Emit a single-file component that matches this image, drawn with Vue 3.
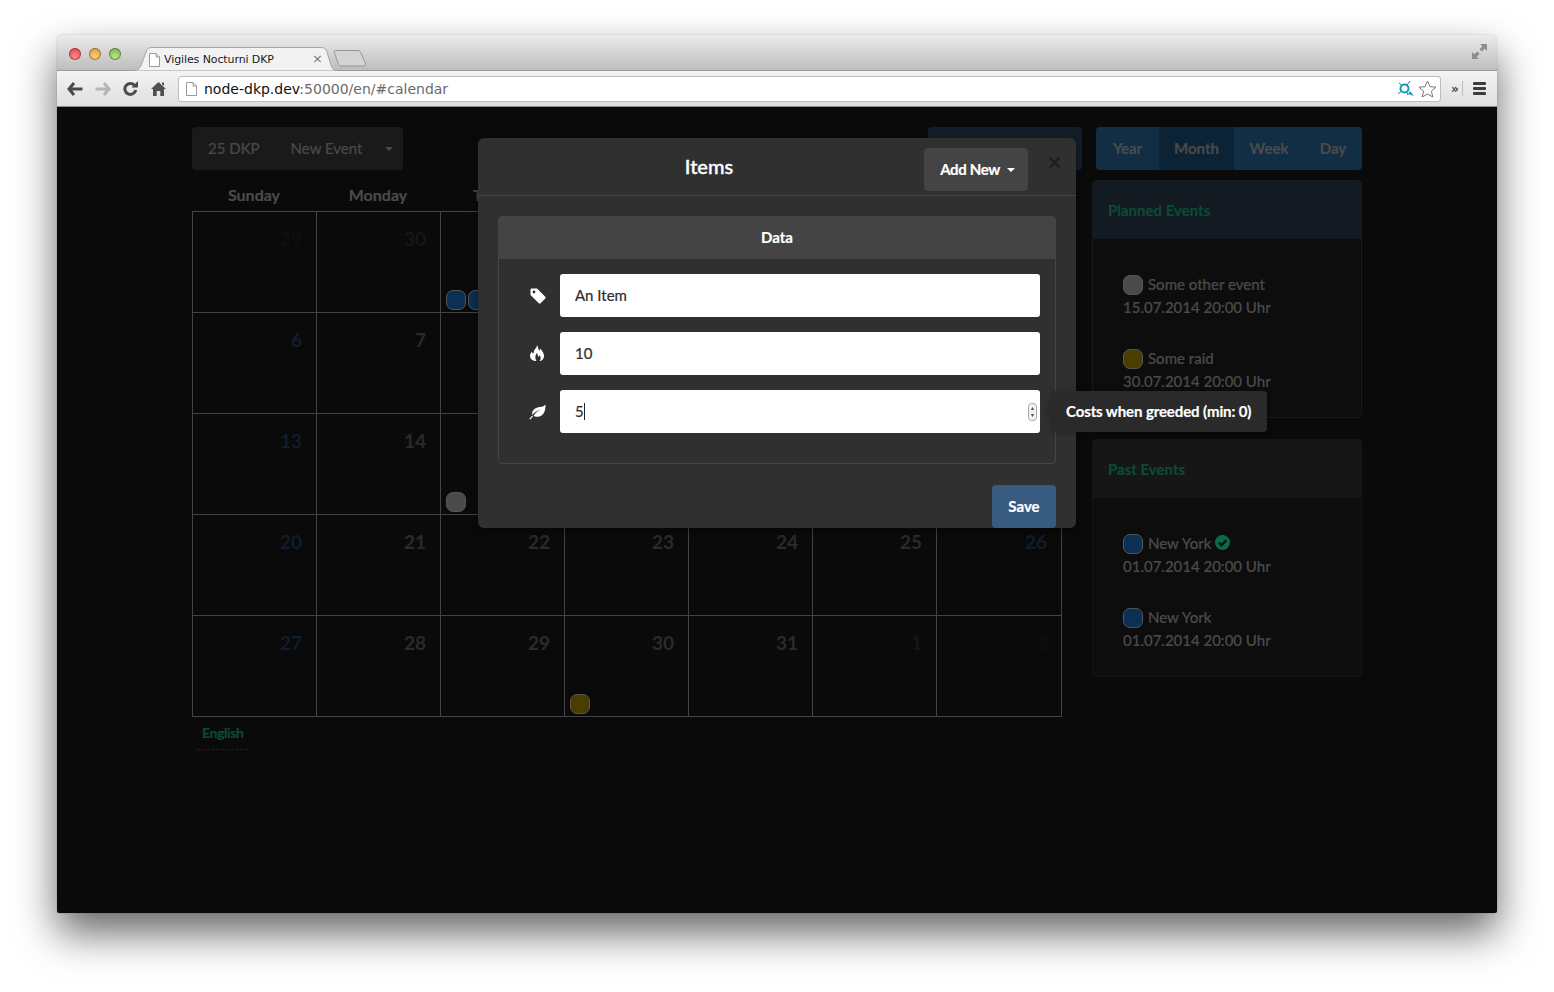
<template>
  <div class="page">
    <div class="window">
      <div class="titlebar">
        <div class="lights">
          <span class="light red"></span>
          <span class="light amber"></span>
          <span class="light green"></span>
        </div>
        <div class="tab">
          <svg class="tab-shape" width="204" height="25" viewBox="0 0 204 25">
            <path d="M0 24.5 C6 24.5 7 22 9 17 L13 6 C14 3 15 1.5 19 1.5 L188 1.5 C192 1.5 193 3 194 6 L198 19 C199 23 201 24.5 204 24.5" fill="#f2f2f2" stroke="#a5a5a5" />
          </svg>
          <svg class="tab-file" width="11" height="14" viewBox="0 0 11 14">
            <path d="M.5 .5 H7 L10.5 4 V13.5 H.5 Z M7 .5 V4 H10.5" fill="#fff" stroke="#9a9a9a" />
          </svg>
          <span class="tab-title">Vigiles Nocturni DKP</span>
          <span class="tab-close">×</span>
        </div>
        <svg class="newtab" width="34" height="17" viewBox="0 0 34 17">
          <path d="M1 1.5 C1 1 2 .5 3 .5 H25 C26 .5 27 1 27.5 2 L32.5 13 C33 15 32 16 30 16 H8 C7 16 6 15.5 5.5 14.5 Z" fill="#d4d4d4" stroke="#969696" />
        </svg>
        <svg class="expand" width="15" height="15" viewBox="0 0 15 15">
          <path d="M8 0 H15 V7 L12.7 4.7 L9.8 7.6 L7.4 5.2 L10.3 2.3 Z M0 15 V8 L2.3 10.3 L5.2 7.4 L7.6 9.8 L4.7 12.7 L7 15 Z" fill="#8d8d8d" />
        </svg>
      </div>

      <div class="toolbar">
        <svg class="nav" width="16" height="14" viewBox="0 0 16 14">
          <path d="M7 1 L2 7 L7 13 M2.5 7 H15.5" fill="none" stroke="#4a4a4a" stroke-width="3" />
        </svg>
        <svg class="nav" width="16" height="14" viewBox="0 0 16 14">
          <path d="M9 1 L14 7 L9 13 M13.5 7 H.5" fill="none" stroke="#b4b4b4" stroke-width="3" />
        </svg>
        <svg class="nav reload" width="15" height="15" viewBox="0 0 15 15">
          <path d="M11.5 4.2 A5.5 5.5 0 1 0 12.8 9" fill="none" stroke="#4a4a4a" stroke-width="3" />
          <path d="M8.5 6.5 H15 V0 Z" fill="#4a4a4a" />
        </svg>
        <svg class="nav" width="15" height="15" viewBox="0 0 15 15">
          <path d="M7.5 1 L15 8 H13 V15 H9.3 V10 H5.7 V15 H2 V8 H0 Z M11 1.5 H13 V5 L11 3.2 Z" fill="#4f4f4f" />
        </svg>
        <div class="omnibox">
          <svg width="11" height="14" viewBox="0 0 11 14">
            <path d="M.5 .5 H7 L10.5 4 V13.5 H.5 Z M7 .5 V4 H10.5" fill="#fff" stroke="#9a9a9a" />
          </svg>
          <span class="url"><b>node-dkp.dev</b>:50000/en/#calendar</span>
          <svg class="ext" width="18" height="17" viewBox="0 0 18 17">
            <path d="M9 8 L3 3 M9 8 L14 1 M9 8 L2 14 M9 8 L12 15" stroke="#3b6f85" fill="none" />
            <circle cx="8.5" cy="8.5" r="4" fill="#fff" stroke="#119cc4" stroke-width="2" />
            <path d="M12 14 L18 16 L14 11 Z" fill="#119cc4" />
          </svg>
          <svg class="star" width="19" height="18" viewBox="0 0 19 18">
            <path d="M9.5 1 L12 6.6 L18 7.2 L13.4 11.2 L14.8 17 L9.5 14 L4.2 17 L5.6 11.2 L1 7.2 L7 6.6 Z" fill="#fff" stroke="#777" />
          </svg>
        </div>
        <span class="more">»</span>
        <span class="divider"></span>
        <div class="burger"><i></i><i></i><i></i></div>
      </div>

      <div class="content">
        <div class="top-row">
          <div class="btn-group dark">
            <span class="dkp">25 DKP</span>
            <span class="new-event">New Event</span>
            <span class="caret"></span>
          </div>
          <div class="top-right">
            <div class="today-btn"></div>
            <div class="btn-group blue">
              <span v-for="v in views" :key="v" :class="['view', { active: v === 'Month' }]">{{ v }}</span>
            </div>
          </div>
        </div>

        <div class="main">
          <div class="calendar">
            <div class="weekdays">
              <span v-for="d in weekdays" :key="d">{{ d }}</span>
            </div>
            <div class="grid">
              <div v-for="(c, i) in cells" :key="i" class="cell">
                <span :class="['num', { weekend: i % 7 === 0 || i % 7 === 6, other: c.other }]">{{ c.day }}</span>
                <div v-if="c.dots" class="dots">
                  <span v-for="(dot, j) in c.dots" :key="j" :class="['dot', dot]"></span>
                </div>
              </div>
            </div>
            <div class="lang">English</div>
          </div>

          <div class="side">
            <div v-for="p in panels" :key="p.title" :class="['panel', p.cls]">
              <div class="panel-head">{{ p.title }}</div>
              <div class="panel-body">
                <div v-for="(e, k) in p.events" :key="k" class="event">
                  <div class="event-name">
                    <span :class="['dot', e.color]"></span>
                    <span class="event-text">{{ e.name }}</span>
                    <svg v-if="e.done" class="check" width="15" height="15" viewBox="0 0 15 15">
                      <circle cx="7.5" cy="7.5" r="7.5" fill="#0b6a4c" />
                      <path d="M3.8 7.6 L6.5 10.2 L11.2 5.2" fill="none" stroke="#0d0d0d" stroke-width="2.4" />
                    </svg>
                  </div>
                  <div>{{ e.date }}</div>
                </div>
              </div>
            </div>
          </div>
        </div>

        <div class="modal">
          <div class="modal-head">
            <div class="modal-title">Items</div>
            <div class="add-btn">Add New <span class="caret light-caret"></span></div>
            <div class="close">×</div>
          </div>
          <div class="modal-body">
            <div class="data-panel">
              <div class="data-head">Data</div>
              <div class="data-body">
                <div class="row">
                  <div class="row-icon">
                    <svg width="16" height="16" viewBox="0 0 16 16">
                      <path fill-rule="evenodd" d="M1.5 .5 H7 L15.3 8.8 C15.8 9.4 15.8 10 15.3 10.6 L10.6 15.3 C10 15.8 9.4 15.8 8.8 15.3 L.5 7 V1.5 C.5 1 1 .5 1.5 .5 Z M4 2.6 A1.4 1.4 0 1 0 4 5.4 A1.4 1.4 0 1 0 4 2.6 Z" fill="#fff" />
                    </svg>
                  </div>
                  <div class="field"><input class="input" type="text" value="An Item" readonly /></div>
                </div>
                <div class="row">
                  <div class="row-icon">
                    <svg class="fire" width="14" height="16" viewBox="0 0 14 16">
                      <path fill-rule="evenodd" d="M7 0 C8.5 2.5 8 4 9 5.2 C10 6 10 4.5 10 3.6 C12.5 6 14 8.5 14 11 C14 14 11.5 16 9.5 16 C11 14.5 11.2 12 9.5 10 C9.4 11 9 11.5 8.4 11.5 C7.6 11.5 8 9.5 7 8 C5.5 10 4.5 12.5 6.5 16 C3 16 0 14 0 11 C0 9 1 7.5 2 6.5 C2 7.5 2.2 8.2 3 8.2 C4 8.2 3.8 7 4 6 C4.4 4 7 3 7 0 Z" fill="#fff" />
                    </svg>
                  </div>
                  <div class="field"><input class="input" type="text" value="10" readonly /></div>
                </div>
                <div class="row">
                  <div class="row-icon">
                    <svg width="17" height="16" viewBox="0 0 17 16">
                      <path d="M16.5 .5 C16.8 7 14.5 12.5 8.5 12.8 C6.8 12.9 5.5 12.4 4.6 12 C6 9 8.5 7 12 5.5 C8 6.5 5.2 8.8 3.4 11 C2.5 8 4.5 4.3 8.5 3.4 C11.5 2.8 14.5 3 16.5 .5 Z M3.2 11.6 L4 12.4 L1.3 15.6 L.2 15 Z" fill="#fff" />
                    </svg>
                  </div>
                  <div class="field">
                    <input class="input" type="text" value="5" readonly />
                    <span class="text-caret"></span>
                    <span class="spinner">
                      <svg width="9" height="18" viewBox="0 0 9 18">
                        <rect x=".5" y=".5" width="8" height="17" rx="3" fill="#f2f2f2" stroke="#a8a8a8" />
                        <path d="M2.8 7 L4.5 4 L6.2 7 Z M2.8 11 L4.5 14 L6.2 11 Z" fill="#555" />
                      </svg>
                    </span>
                  </div>
                </div>
              </div>
            </div>
            <div class="modal-foot"><div class="save-btn">Save</div></div>
          </div>
        </div>

        <div class="tooltip">Costs when greeded (min: 0)</div>
      </div>
    </div>
  </div>
</template>

<script setup>
const views = ["Year", "Month", "Week", "Day"]
const weekdays = ["Sunday", "Monday", "Tuesday", "Wednesday", "Thursday", "Friday", "Saturday"]

// Juli 2014, beginnt mit den letzten Junitagen
const cells = []
for (let i = 0; i < 35; i++) {
  let day = i - 1
  let other = false
  if (day < 1) {
    day = 29 + i
    other = true
  } else if (day > 31) {
    day = day - 31
    other = true
  }
  cells.push({ day, other })
}
cells[2].dots = ["navy", "navy"]
cells[16].dots = ["grey"]
cells[31].dots = ["gold"]

const panels = [
  {
    title: "Planned Events",
    cls: "planned",
    events: [
      { name: "Some other event", date: "15.07.2014 20:00 Uhr", color: "grey" },
      { name: "Some raid", date: "30.07.2014 20:00 Uhr", color: "gold" },
    ],
  },
  {
    title: "Past Events",
    cls: "past",
    events: [
      { name: "New York", date: "01.07.2014 20:00 Uhr", color: "navy", done: true },
      { name: "New York", date: "01.07.2014 20:00 Uhr", color: "navy" },
    ],
  },
]
</script>

<style>
body {
  background: #fff;
}
</style>

<style scoped>
.page {
  width: 1554px;
  height: 992px;
  padding: 35px 57px 0;
  box-sizing: border-box;
  overflow: hidden;
  font-family: "Lato", "Liberation Sans", sans-serif;
  font-size: 15px;
}
.window {
  width: 1440px;
  height: 878px;
  display: flex;
  flex-direction: column;
  border-radius: 5px 5px 2px 2px;
  box-shadow: 0 0 1px rgba(0, 0, 0, 0.55), 0 20px 42px rgba(0, 0, 0, 0.6);
}

/* browser chrome */
.titlebar {
  height: 36px;
  box-sizing: border-box;
  display: flex;
  align-items: flex-end;
  background: linear-gradient(#ececec, #bdbdbd);
  border-bottom: 1px solid #9c9c9c;
  border-radius: 5px 5px 0 0;
  position: relative;
}
.lights {
  display: flex;
  gap: 8px;
  align-self: flex-start;
  margin: 13px 0 0 12px;
}
.light {
  width: 12px;
  height: 12px;
  border-radius: 50%;
  box-shadow: inset 0 0 0 1px rgba(0, 0, 0, 0.3);
}
.red {
  background: radial-gradient(circle at 50% 70%, #ff8c8c, #d8333a);
}
.amber {
  background: radial-gradient(circle at 50% 70%, #ffd27e, #d48a22);
}
.green {
  background: radial-gradient(circle at 50% 70%, #bfe68c, #62a83e);
}
.tab {
  position: relative;
  width: 204px;
  height: 25px;
  margin: 0 0 -1px 12px;
  display: flex;
  align-items: center;
  font-family: "DejaVu Sans", sans-serif;
  font-size: 11px;
  color: #1a1a1a;
}
.tab-shape {
  position: absolute;
  left: 0;
  top: 0;
}
.tab-file {
  position: relative;
  margin-left: 16px;
  margin-top: 2px;
}
.tab-title {
  position: relative;
  top: 1px;
  margin-left: 4px;
  letter-spacing: -0.1px;
  white-space: nowrap;
}
.tab-close {
  position: absolute;
  left: 179px;
  top: 5px;
  font-size: 13px;
  color: #777;
}
.newtab {
  margin: 0 0 3px -4px;
}
.expand {
  align-self: flex-end;
  margin: 0 10px 11px auto;
}
.toolbar {
  height: 36px;
  box-sizing: border-box;
  display: flex;
  align-items: center;
  padding: 0 11px 0 10px;
  background: linear-gradient(#f3f3f3, #dfdfdf);
  border-bottom: 1px solid #8e8e8e;
}
.nav {
  margin-right: 12px;
  flex: none;
}
.nav.reload {
  margin-right: 13px;
}
.omnibox {
  width: 1263px;
  height: 26px;
  box-sizing: border-box;
  display: flex;
  align-items: center;
  padding: 0 3px 0 7px;
  background: #fff;
  border: 1px solid #bdbdbd;
  border-radius: 3px;
}
.url {
  margin-left: 7px;
  font-family: "DejaVu Sans", sans-serif;
  font-size: 14px;
  color: #6a6a6a;
  white-space: nowrap;
}
.url b {
  font-weight: 400;
  color: #111;
}
.ext {
  margin-left: auto;
}
.star {
  margin-left: 4px;
}
.more {
  margin-left: 10px;
  font-family: "DejaVu Sans", sans-serif;
  font-size: 12px;
  font-weight: 700;
  color: #444;
}
.divider {
  width: 1px;
  height: 15px;
  margin-left: 3px;
  background: #bbb;
}
.burger {
  margin-left: 10px;
  width: 13px;
  display: flex;
  flex-direction: column;
  gap: 2px;
}
.burger i {
  display: block;
  height: 3px;
  border-radius: 1px;
  background: #3d3d3d;
}

/* page behind the modal */
.content {
  flex: 1;
  position: relative;
  box-sizing: border-box;
  padding: 20px 135px 0;
  background: #0a0a0a;
  color: #4a4a4a;
  overflow: hidden;
  border-radius: 0 0 2px 2px;
  -webkit-text-stroke: 0.2px;
}
.top-row {
  display: flex;
  justify-content: space-between;
  height: 43px;
}
.btn-group {
  display: flex;
  align-items: center;
  height: 43px;
  border-radius: 4px;
}
.dark {
  width: 211px;
  box-sizing: border-box;
  padding: 0 10px 2px 16px;
  background: #1a1a1a;
}
.new-event {
  margin-left: 31px;
}
.caret {
  display: inline-block;
  width: 0;
  height: 0;
  margin: 2px 0 0 auto;
  border-left: 4px solid transparent;
  border-right: 4px solid transparent;
  border-top: 4px solid #4a4a4a;
}
.top-right {
  display: flex;
  gap: 14px;
}
.today-btn {
  width: 154px;
  height: 43px;
  border-radius: 4px;
  background: #131d29;
}
.blue {
  display: grid;
  grid-template-columns: 63px 75px 70px 58px;
  width: 266px;
  background: #122e45;
  overflow: hidden;
}
.view {
  height: 43px;
  line-height: 42px;
  text-align: center;
  font-weight: 700;
}
.view.active {
  background: #0c2335;
}
.main {
  display: flex;
  justify-content: space-between;
  margin-top: 10px;
}
.calendar {
  width: 870px;
}
.weekdays {
  display: grid;
  grid-template-columns: repeat(7, 124px);
  height: 31px;
  font-size: 16px;
  font-weight: 700;
  text-align: center;
  line-height: 29px;
}
.grid {
  display: grid;
  grid-template-columns: repeat(6, 124px) 125px;
  grid-auto-rows: 101px;
  border-top: 1px solid #444;
  border-left: 1px solid #444;
}
.cell {
  display: flex;
  flex-direction: column;
  justify-content: space-between;
  border-right: 1px solid #444;
  border-bottom: 1px solid #444;
  padding: 15px 14px 2px 5px;
  min-width: 0;
}
.num {
  align-self: flex-end;
  font-size: 19px;
  font-weight: 700;
  line-height: 24px;
  color: #2b2b2b;
  -webkit-text-stroke: 0;
}
.num.weekend {
  color: #101d2e;
}
.num.other {
  color: #161616;
}
.num.weekend.other {
  color: #0b0f15;
}
.dots {
  display: flex;
  gap: 2px;
}
.dot {
  flex: none;
  width: 20px;
  height: 20px;
  box-sizing: border-box;
  border-radius: 7px;
  border: 1px solid #555;
}
.navy {
  background: #0c2f54;
}
.grey {
  background: #4a4a4a;
}
.gold {
  background: #4a3d00;
}
.lang {
  display: inline-block;
  margin: 7px 0 0 5px;
  padding: 0 5px 8px 5px;
  font-size: 14px;
  font-weight: 700;
  line-height: 17px;
  letter-spacing: -0.4px;
  color: #0b4a36;
  border-bottom: 1px dashed #0f2436;
}
.side {
  width: 270px;
}
.panel {
  margin-bottom: 21px;
  border-radius: 4px;
  overflow: hidden;
  background: #0d0d0d;
}
.planned {
  border: 1px solid #121c27;
  box-sizing: border-box;
  height: 238px;
}
.past {
  border: 1px solid #151515;
  box-sizing: border-box;
  height: 238px;
}
.panel-head {
  height: 58px;
  line-height: 58px;
  padding-left: 15px;
  font-size: 15px;
  font-weight: 700;
  color: #0b4a36;
}
.planned .panel-head {
  background: #131a22;
}
.past .panel-head {
  background: #161616;
}
.panel-body {
  padding: 36px 0 0 30px;
}
.event {
  margin-bottom: 28px;
  height: 46px;
  line-height: 23px;
  font-size: 15px;
  font-weight: 500;
}
.event-name {
  display: flex;
  align-items: center;
  gap: 5px;
  height: 20px;
  margin-bottom: 1px;
}
.event-text {
  padding-bottom: 2px;
}
.check {
  margin: -3px 0 0 -1px;
}

/* modal */
.modal {
  position: absolute;
  left: 421px;
  top: 31px;
  width: 598px;
  height: 390px;
  background: #303030;
  border-radius: 6px;
  box-shadow: 0 3px 10px rgba(0, 0, 0, 0.4);
  color: #fff;
}
.modal-head {
  height: 58px;
  box-sizing: border-box;
  display: flex;
  align-items: flex-start;
  padding: 10px 0 0 16px;
  border-bottom: 1px solid #464646;
}
.modal-title {
  width: 430px;
  text-align: center;
  font-size: 20px;
  font-weight: 500;
  line-height: 36px;
  -webkit-text-stroke: 0.4px;
}
.add-btn {
  width: 104px;
  height: 43px;
  box-sizing: border-box;
  padding: 0 0 2px 3px;
  display: flex;
  align-items: center;
  justify-content: center;
  gap: 7px;
  background: #444;
  border-radius: 4px;
  font-weight: 700;
  letter-spacing: -0.35px;
}
.light-caret {
  margin: 2px 0 0 0;
  border-top-color: #fff;
}
.close {
  flex: 1;
  padding-left: 5px;
  text-align: center;
  font-size: 24px;
  font-weight: 700;
  line-height: 28px;
  color: #1f1f1f;
}
.modal-body {
  padding: 20px 20px 0;
}
.data-panel {
  height: 248px;
  box-sizing: border-box;
  border: 1px solid #464646;
  border-radius: 4px;
}
.data-head {
  height: 42px;
  line-height: 40px;
  background: #444;
  text-align: center;
  font-weight: 700;
}
.data-body {
  padding: 15px 15px 0 0;
  display: flex;
  flex-direction: column;
  gap: 15px;
}
.row {
  display: flex;
  height: 43px;
}
.row-icon {
  width: 61px;
  flex: none;
  box-sizing: border-box;
  padding-right: 14px;
  display: flex;
  align-items: center;
  justify-content: flex-end;
}
.fire {
  margin: -2px 2px 0 0;
}
.field {
  flex: 1;
  position: relative;
}
.input {
  display: block;
  width: 100%;
  height: 43px;
  box-sizing: border-box;
  padding: 0 15px 2px;
  border: 0;
  border-radius: 3px;
  outline: 0;
  background: #fff;
  font-family: inherit;
  font-size: 15px;
  color: #2d2d2d;
}
.text-caret {
  position: absolute;
  left: 24px;
  top: 13px;
  width: 1px;
  height: 17px;
  background: #222;
}
.spinner {
  position: absolute;
  right: 3px;
  top: 13px;
  line-height: 0;
}
.modal-foot {
  display: flex;
  justify-content: flex-end;
  margin-top: 21px;
}
.save-btn {
  width: 64px;
  height: 43px;
  line-height: 43px;
  text-align: center;
  background: #375a7f;
  border-radius: 4px;
  font-weight: 700;
}
.tooltip {
  position: absolute;
  left: 994px;
  top: 284px;
  height: 41px;
  line-height: 41px;
  padding: 0 16px 0 15px;
  background: #2a2a2a;
  border-radius: 4px;
  box-shadow: 0 1px 6px rgba(0, 0, 0, 0.25);
  color: #fff;
  font-weight: 700;
  letter-spacing: -0.11px;
  white-space: nowrap;
}
.tooltip::before {
  content: "";
  position: absolute;
  left: -8px;
  top: 12px;
  border-top: 8px solid transparent;
  border-bottom: 8px solid transparent;
  border-right: 8px solid #2a2a2a;
}
</style>
